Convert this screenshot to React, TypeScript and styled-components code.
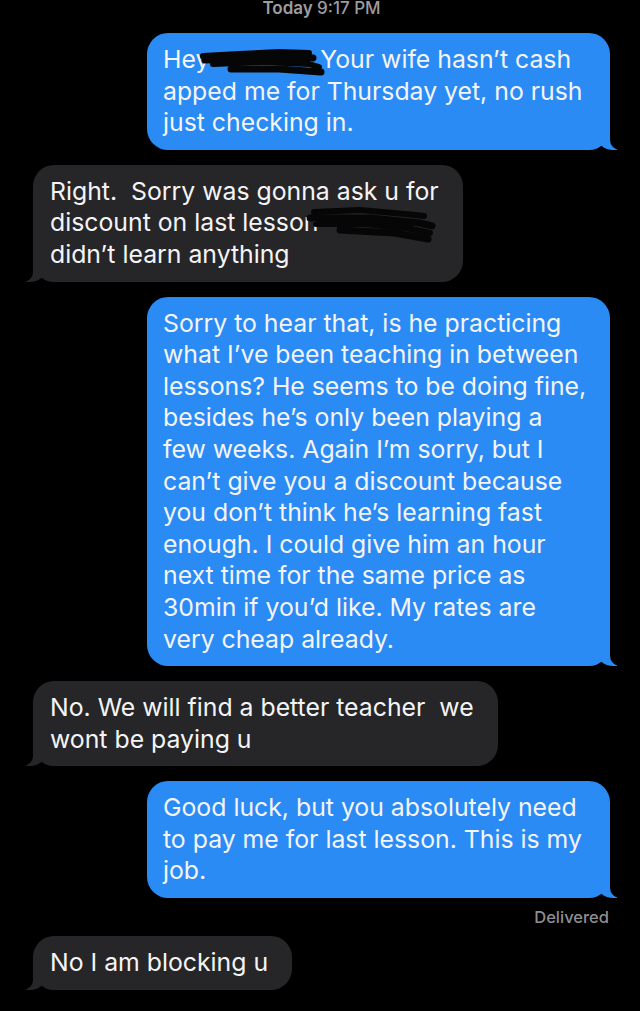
import React from "react";
import styled, { createGlobalStyle, css } from "styled-components";

const GlobalStyle = createGlobalStyle`
  html, body {
    margin: 0;
    background: #000;
  }
  body {
    font-family: Inter, "Liberation Sans", sans-serif;
    -webkit-font-smoothing: antialiased;
  }
`;

const BLUE = "#2a8bf5";
const GRAY = "#262628";

const Screen = styled.div`
  min-height: 1011px;
  background: #000;
  display: flex;
  flex-direction: column;
  padding: 0 30px 0 33px;
  box-sizing: border-box;
  overflow: hidden;
`;

const Timestamp = styled.div`
  margin-top: -2px;
  text-align: center;
  color: #9c9ca1;
  font-size: 17px;
  font-weight: 600;
  line-height: 20px;
  margin-bottom: 15px;

  span {
    font-weight: 500;
  }
`;

const Thread = styled.div`
  display: flex;
  flex-direction: column;
  gap: 15px;
`;

const Bubble = styled.div<{ $out?: boolean }>`
  position: relative;
  width: fit-content;
  box-sizing: border-box;
  border-radius: 21px;
  padding: 11px 24px 11px 17px;
  font-size: 24.8px;
  line-height: 31.6px;
  color: #f4f4f6;
  white-space: pre;
  background: ${GRAY};
  align-self: flex-start;

  &::before,
  &::after {
    content: "";
    position: absolute;
    bottom: 0;
    height: 22px;
  }

  &::before {
    width: 20px;
    left: -7px;
    background: ${GRAY};
    border-bottom-right-radius: 16px 14px;
  }

  &::after {
    width: 20px;
    left: -20px;
    background: #000;
    border-bottom-right-radius: 10px;
  }

  ${(p) =>
    p.$out &&
    css`
      align-self: flex-end;
      width: 463px;
      background: ${BLUE};
      padding: 11px 20px 11px 16px;

      &::before {
        left: auto;
        right: -7px;
        background: ${BLUE};
        border-bottom-right-radius: 0;
        border-bottom-left-radius: 16px 14px;
      }

      &::after {
        left: auto;
        right: -20px;
        border-bottom-right-radius: 0;
        border-bottom-left-radius: 10px;
      }
    `}
`;

const Status = styled.div`
  align-self: flex-end;
  margin: -6px 1px -6px 0;
  color: #8e8e93;
  font-size: 16.5px;
  font-weight: 500;
  line-height: 20px;
`;

const Redact = styled.span<{ $w: number }>`
  display: inline-block;
  width: ${(p) => p.$w}px;
  height: 31px;
  vertical-align: top;
  position: relative;
  z-index: 2;

  svg {
    display: block;
    overflow: visible;
  }
`;

const Scribble = ({ w, strokes }: { w: number; strokes: string[] }) => (
  <svg width={w} height={31} viewBox={`0 0 ${w} 31`}>
    {strokes.map((d, i) => (
      <path
        key={i}
        d={d}
        fill="none"
        stroke="#060606"
        strokeWidth={i % 2 ? 7 : 6}
        strokeLinecap="round"
        strokeLinejoin="round"
      />
    ))}
  </svg>
);

const nameStrokes = [
  "M-6 12 L30 10 L70 8 L100 9",
  "M-4 16 L40 14 L85 12 L104 14",
  "M4 20 L55 18 L100 20 L110 23",
  "M22 25 L70 25 L112 28",
  "M40 16 L98 18",
];

const sonStrokes = [
  "M4 5 L50 3 L95 7 L114 9",
  "M0 11 L60 11 L110 16 L122 19",
  "M6 17 L55 17 L96 21 L120 26",
  "M30 23 L85 26 L118 32",
  "M50 13 L100 19",
];

export default function App() {
  return (
    <>
      <GlobalStyle />
      <Screen>
        <Timestamp>
          Today <span>9:17 PM</span>
        </Timestamp>
        <Thread>
          <Bubble $out>
            {"Hey"}
            <Redact $w={104}>
              <Scribble w={104} strokes={nameStrokes} />
            </Redact>
            {" Your wife hasn’t cash\napped me for Thursday yet, no rush\njust checking in."}
          </Bubble>

          <Bubble>
            {"Right.  Sorry was gonna ask u for\ndiscount on last lesson"}
            <Redact $w={112} style={{ marginLeft: -8 }}>
              <Scribble w={112} strokes={sonStrokes} />
            </Redact>
            {"\ndidn’t learn anything"}
          </Bubble>

          <Bubble $out>
            {[
              "Sorry to hear that, is he practicing",
              "what I’ve been teaching in between",
              "lessons? He seems to be doing fine,",
              "besides he’s only been playing a",
              "few weeks. Again I’m sorry, but I",
              "can’t give you a discount because",
              "you don’t think he’s learning fast",
              "enough. I could give him an hour",
              "next time for the same price as",
              "30min if you’d like. My rates are",
              "very cheap already.",
            ].join("\n")}
          </Bubble>

          <Bubble>{"No. We will find a better teacher  we\nwont be paying u"}</Bubble>

          <Bubble $out>
            {"Good luck, but you absolutely need\nto pay me for last lesson. This is my\njob."}
          </Bubble>

          <Status>Delivered</Status>

          <Bubble>No I am blocking u</Bubble>
        </Thread>
      </Screen>
    </>
  );
}
